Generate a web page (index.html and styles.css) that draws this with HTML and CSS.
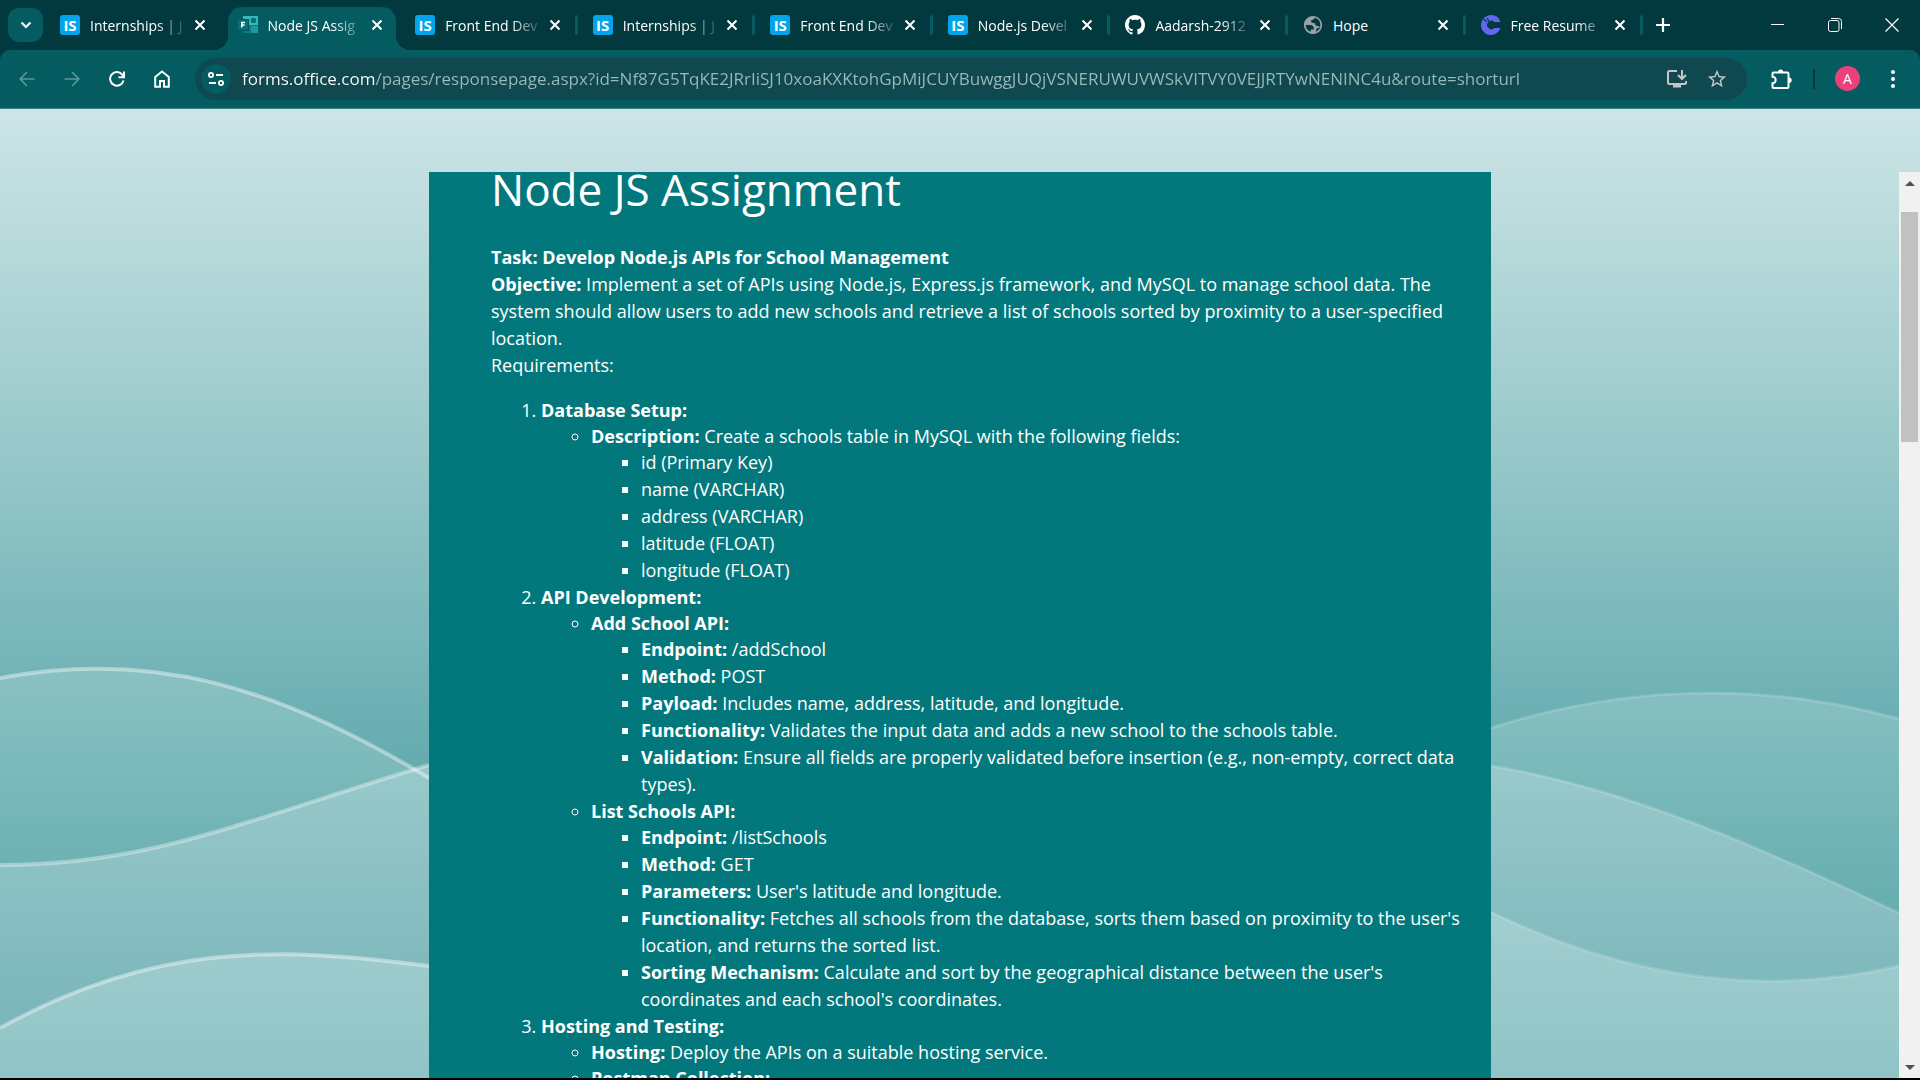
FILE: index.html
```html
<!DOCTYPE html>
<html lang="en">
<head>
<meta charset="utf-8">
<title>Node JS Assignment</title>
<link rel="stylesheet" href="styles.css">
</head>
<body>
<svg class="defs" aria-hidden="true">
  <symbol id="x" viewBox="0 0 12 12"><path d="M1.5 1.5l9 9M10.5 1.5l-9 9" stroke="currentColor" stroke-width="2" fill="none"/></symbol>
</svg>
<header class="browser">
  <div class="strip">
    <button class="search-tabs" aria-label="Search tabs"><svg width="12" height="8" viewBox="0 0 12 8"><path d="M1.5 1.5L6 6l4.5-4.5" stroke="currentColor" stroke-width="2.2" fill="none"/></svg></button>
    <nav class="tabs" aria-label="Open tabs">
      <div class="tab"><button class="tab-title"><span class="is">IS</span><span class="label">Internships | J</span></button><button class="close" aria-label="Close tab"><svg><use href="#x"/></svg></button></div>
      <div class="tab active"><button class="tab-title"><svg class="fav" viewBox="0 0 20 20"><path d="M5 1h15v9H5z" fill="#35b9c0"/><path d="M5 10h15v8H5z" fill="#0a7b83"/><circle cx="15.5" cy="5.5" r="2.8" fill="#0a6f78"/><path d="M13 11h7v7h-7z" fill="#1c9aa2"/><path d="M5 4h6v12H5z" fill="#02565d"/><rect y="5" width="10" height="10" rx="1" fill="#037178"/><path d="M3.8 12.5V7.5H7M3.8 10H6.6" stroke="#fff" stroke-width="1.6" fill="none"/></svg><span class="label">Node JS Assig</span></button><button class="close" aria-label="Close tab"><svg><use href="#x"/></svg></button></div>
      <div class="tab"><button class="tab-title"><span class="is">IS</span><span class="label">Front End Dev</span></button><button class="close" aria-label="Close tab"><svg><use href="#x"/></svg></button></div>
      <div class="tab"><button class="tab-title"><span class="is">IS</span><span class="label">Internships | J</span></button><button class="close" aria-label="Close tab"><svg><use href="#x"/></svg></button></div>
      <div class="tab"><button class="tab-title"><span class="is">IS</span><span class="label">Front End Dev</span></button><button class="close" aria-label="Close tab"><svg><use href="#x"/></svg></button></div>
      <div class="tab"><button class="tab-title"><span class="is">IS</span><span class="label">Node.js Devel</span></button><button class="close" aria-label="Close tab"><svg><use href="#x"/></svg></button></div>
      <div class="tab"><button class="tab-title"><svg class="fav" viewBox="0 0 16 16"><path fill="#fff" d="M8 0C3.58 0 0 3.58 0 8c0 3.54 2.29 6.53 5.47 7.59.4.07.55-.17.55-.38 0-.19-.01-.82-.01-1.49-2.01.37-2.53-.49-2.69-.94-.09-.23-.48-.94-.82-1.13-.28-.15-.68-.52-.01-.53.63-.01 1.08.58 1.23.82.72 1.21 1.87.87 2.33.66.07-.52.28-.87.51-1.07-1.78-.2-3.64-.89-3.64-3.95 0-.87.31-1.59.82-2.15-.08-.2-.36-1.02.08-2.12 0 0 .67-.21 2.2.82.64-.18 1.32-.27 2-.27s1.36.09 2 .27c1.53-1.04 2.2-.82 2.2-.82.44 1.1.16 1.92.08 2.12.51.56.82 1.27.82 2.15 0 3.07-1.87 3.75-3.65 3.95.29.25.54.73.54 1.48 0 1.07-.01 1.93-.01 2.2 0 .21.15.46.55.38A8.01 8.01 0 0 0 16 8c0-4.42-3.58-8-8-8z"/></svg><span class="label">Aadarsh-2912</span></button><button class="close" aria-label="Close tab"><svg><use href="#x"/></svg></button></div>
      <div class="tab"><button class="tab-title"><svg class="fav" viewBox="1 1 22 22"><path fill="#9aa0a6" d="M12 2C6.48 2 2 6.48 2 12s4.48 10 10 10 10-4.48 10-10S17.52 2 12 2zM4 12h4.4c3.4.02 4.9 1.7 4.6 5H9.5v2.5A8 8 0 0 1 4 12zm10.5 7.6c1.5-.8.6-2.6 1.5-3.6.8-.8 3-.3 3.3-1.7.2-1.1-1.4-1.3-2.3-1.3-2 0-3-1.8-2.5-3C12 10 9 9 10 7c.5-1.2 2.5-.6 3.3-1.4.4-.5.2-1.1.2-1.5a8 8 0 0 1 1 15.5z"/></svg><span class="label">Hope</span></button><button class="close" aria-label="Close tab"><svg><use href="#x"/></svg></button></div>
      <div class="tab"><button class="tab-title"><svg class="fav" viewBox="0 0 20 20"><path d="M10 0a10 10 0 0 1 9.5 7h-6.2a4.2 4.2 0 1 0 0 6h6.2A10 10 0 1 1 10 0z" fill="#6466f1"/><path d="M2.5 4l3.5 3M6 3l2 3.5" stroke="#02393e" stroke-width="1.2" fill="none"/></svg><span class="label">Free Resume</span></button><button class="close" aria-label="Close tab"><svg><use href="#x"/></svg></button></div>
    </nav>
    <button class="new-tab" aria-label="New tab"><svg width="14" height="14" viewBox="0 0 14 14"><path d="M7 0v14M0 7h14" stroke="currentColor" stroke-width="2.2"/></svg></button>
    <div class="window-controls">
      <button aria-label="Minimize"><svg width="14" height="14" viewBox="0 0 14 14"><path d="M0 6.5h13" stroke="currentColor"/></svg></button>
      <button aria-label="Restore"><svg width="14" height="14" viewBox="0 0 14 14"><rect x=".5" y="2.5" width="10.5" height="11" rx="2" stroke="currentColor" fill="none"/><path d="M3 .5h7.5a3 3 0 0 1 3 3V11" stroke="currentColor" fill="none"/></svg></button>
      <button aria-label="Close window"><svg width="14" height="14" viewBox="0 0 14 14"><path d="M.5.5l13 13M13.5.5l-13 13" stroke="currentColor" stroke-width="1.2"/></svg></button>
    </div>
  </div>
  <div class="toolbar">
    <div class="nav">
      <button class="off" aria-label="Back"><svg width="16" height="16" viewBox="0 0 16 16"><path d="M15.5 8H1.5M8 1L1.2 8 8 15" stroke="currentColor" stroke-width="1.7" fill="none"/></svg></button>
      <button class="off" aria-label="Forward"><svg width="16" height="16" viewBox="0 0 16 16"><path d="M.5 8h14M8 1l6.8 7L8 15" stroke="currentColor" stroke-width="1.7" fill="none"/></svg></button>
      <button aria-label="Reload"><svg width="16" height="16" viewBox="0 0 16 16"><path d="M14.5 9.5A6.8 6.8 0 1 1 13.2 3.6L15 5.5" stroke="currentColor" stroke-width="2" fill="none"/><path d="M15 .5v5.7H9.5" stroke="currentColor" stroke-width="2" fill="none"/></svg></button>
      <button aria-label="Home"><svg width="16" height="18" viewBox="0 0 16 18"><path d="M1.2 16.8V7L8 1.5 14.8 7v9.8H10V11H6v5.8z" stroke="currentColor" stroke-width="2" fill="none"/></svg></button>
    </div>
    <div class="omnibox">
      <button class="site-info" aria-label="View site information"><svg width="16" height="14" viewBox="0 0 16 14"><g stroke="currentColor" stroke-width="1.8" fill="none"><circle cx="3" cy="3" r="2.1"/><path d="M8 3h7M1 11h7"/><circle cx="13" cy="11" r="2.1"/></g></svg></button>
      <input type="text" aria-label="Address and search bar" spellcheck="false" value="forms.office.com/pages/responsepage.aspx?id=Nf87G5TqKE2JRrIiSJ10xoaKXKtohGpMiJCUYBuwggJUQjVSNERUWUVWSkVITVY0VEJJRTYwNENINC4u&amp;route=shorturl">
      <button class="dim" aria-label="Install app"><svg width="20" height="18" viewBox="0 0 20 18"><path d="M10 1H2.5Q1 1 1 2.5v10Q1 14 2.5 14h15q1.5 0 1.5-1.5V11M15 0v8M11 5l4 4 4-4" stroke="currentColor" stroke-width="2" fill="none"/><path d="M6 14h8v3.5H6z" fill="currentColor"/></svg></button>
      <button class="dim" aria-label="Bookmark this tab"><svg width="22" height="22" viewBox="0 0 24 24"><path fill="currentColor" d="M22 9.24l-7.19-.62L12 2 9.19 8.63 2 9.24l5.46 4.73L5.82 21 12 17.27 18.18 21l-1.63-7.03L22 9.24zM12 15.4l-3.76 2.27 1-4.28-3.32-2.88 4.38-.38L12 6.1l1.71 4.04 4.38.38-3.32 2.88 1 4.28L12 15.4z"/></svg></button>
    </div>
    <div class="actions">
      <button class="extensions" aria-label="Extensions"><svg width="22" height="20" viewBox="0 0 22 20"><path d="M2.5 3.5h14q1 0 1 1V18q0 1-1 1h-14q-1 0-1-1v-3.8a3.2 3.2 0 0 0 0-6.4V4.5q0-1 1-1z" stroke="currentColor" stroke-width="2" fill="none"/><path d="M7 3a2.6 2.6 0 0 1 5.2 0zM18 8.5a2.7 2.7 0 0 1 0 5.4z" fill="currentColor"/></svg></button>
      <span class="rule"></span>
      <button class="avatar" aria-label="Profile">A</button>
      <button class="menu" aria-label="Menu"><svg width="4" height="18" viewBox="0 0 4 18"><g fill="currentColor"><circle cx="2" cy="2" r="2"/><circle cx="2" cy="9" r="2"/><circle cx="2" cy="16" r="2"/></g></svg></button>
    </div>
  </div>
</header>
<main class="page">
  <svg class="backdrop" viewBox="0 109 1920 969" preserveAspectRatio="none" aria-hidden="true">
    <defs>
      <linearGradient id="g0" gradientUnits="userSpaceOnUse" x1="0" y1="109" x2="0" y2="770"><stop offset="0" stop-color="#cde5e6"/><stop offset=".53" stop-color="#96c7c9"/><stop offset="1" stop-color="#63abaf"/></linearGradient>
      <linearGradient id="g1" gradientUnits="userSpaceOnUse" x1="0" y1="668" x2="0" y2="900"><stop offset="0" stop-color="#8ac1c3"/><stop offset="1" stop-color="#68afb0"/></linearGradient>
      <linearGradient id="g2" gradientUnits="userSpaceOnUse" x1="0" y1="765" x2="0" y2="1020"><stop offset="0" stop-color="#99c9cb"/><stop offset="1" stop-color="#7ab6ba"/></linearGradient>
      <linearGradient id="g3" gradientUnits="userSpaceOnUse" x1="0" y1="912" x2="0" y2="1078"><stop offset="0" stop-color="#a2ced0"/><stop offset="1" stop-color="#90c4c6"/></linearGradient>
    </defs>
    <path fill="url(#g0)" d="M0 109h1920v969H0z"/>
    <path fill="url(#g1)" d="M0 678C150 650 275 685 429 778V1078H0zM1491 728C1630 683 1770 683 1899 719V1078H1491z"/>
    <path fill="url(#g2)" d="M0 865C150 865 240 822 429 765V1078H0zM1491 766C1620 787 1750 842 1899 913V1078H1491z"/>
    <path fill="url(#g3)" d="M0 1028C150 945 270 945 429 966V1078H0zM1491 912C1620 975 1755 1000 1899 966V1078H1491z"/>
    <g fill="none" stroke="#fff" stroke-width="4" stroke-opacity=".4"><path d="M0 678C150 650 275 685 429 778"/><path d="M0 865C150 865 240 822 429 765" stroke-opacity=".35"/><path d="M0 1028C150 945 270 945 429 966"/></g>
    <g fill="none" stroke="#fff" stroke-width="3" stroke-opacity=".16"><path d="M1491 728C1630 683 1770 683 1899 719"/><path d="M1491 766C1620 787 1750 842 1899 913"/><path d="M1491 912C1620 975 1755 1000 1899 966"/></g>
  </svg>
  <article class="card">
    <h1>Node JS Assignment</h1>
    <p><strong>Task: Develop Node.js APIs for School Management</strong></p>
    <p><strong>Objective:</strong> Implement a set of APIs using Node.js, Express.js framework, and MySQL to manage school data. The system should allow users to add new schools and retrieve a list of schools sorted by proximity to a user-specified location.</p>
    <p>Requirements:</p>
    <ol class="sections">
      <li><strong>Database Setup:</strong>
        <ul class="topics">
          <li><strong>Description:</strong> Create a schools table in MySQL with the following fields:
            <ul class="details">
              <li>id (Primary Key)</li>
              <li>name (VARCHAR)</li>
              <li>address (VARCHAR)</li>
              <li>latitude (FLOAT)</li>
              <li>longitude (FLOAT)</li>
            </ul>
          </li>
        </ul>
      </li>
      <li><strong>API Development:</strong>
        <ul class="topics">
          <li><strong>Add School API:</strong>
            <ul class="details">
              <li><strong>Endpoint:</strong> /addSchool</li>
              <li><strong>Method:</strong> POST</li>
              <li><strong>Payload:</strong> Includes name, address, latitude, and longitude.</li>
              <li><strong>Functionality:</strong> Validates the input data and adds a new school to the schools table.</li>
              <li><strong>Validation:</strong> Ensure all fields are properly validated before insertion (e.g., non-empty, correct data types).</li>
            </ul>
          </li>
          <li><strong>List Schools API:</strong>
            <ul class="details">
              <li><strong>Endpoint:</strong> /listSchools</li>
              <li><strong>Method:</strong> GET</li>
              <li><strong>Parameters:</strong> User's latitude and longitude.</li>
              <li><strong>Functionality:</strong> Fetches all schools from the database, sorts them based on proximity to the user's location, and returns the sorted list.</li>
              <li><strong>Sorting Mechanism:</strong> Calculate and sort by the geographical distance between the user's coordinates and each school's coordinates.</li>
            </ul>
          </li>
        </ul>
      </li>
      <li><strong>Hosting and Testing:</strong>
        <ul class="topics">
          <li><strong>Hosting:</strong> Deploy the APIs on a suitable hosting service.</li>
          <li><strong>Postman Collection:</strong></li>
        </ul>
      </li>
    </ol>
  </article>
  <div class="scrollbar" aria-hidden="true">
    <svg width="10" height="5" viewBox="0 0 10 5"><path d="M5 0l5 5H0z" fill="#505050"/></svg>
    <div class="track"><div class="thumb"></div></div>
    <svg width="10" height="5" viewBox="0 0 10 5"><path d="M0 0h10L5 5z" fill="#505050"/></svg>
  </div>
</main>
</body>
</html>
```
FILE: styles.css
```css
* { box-sizing: border-box; }

body {
  margin: 0;
  height: 100vh;
  display: flex;
  flex-direction: column;
  overflow: hidden;
  background: #000;
  color: #fff;
  font-family: "Open Sans", "Noto Sans", sans-serif;
}

button {
  display: flex;
  flex: none;
  align-items: center;
  justify-content: center;
  padding: 0;
  border: 0;
  background: none;
  color: inherit;
  font: inherit;
}

.defs { display: none; }

.browser { background: #02393e; flex: none; }

.strip { display: flex; height: 50px; align-items: center; }

.search-tabs {
  width: 35px;
  height: 34px;
  margin-left: 8px;
  border-radius: 11px;
  background: #045b60;
}

.tabs { display: flex; flex: 1; min-width: 0; height: 50px; margin-left: 2px; }

.tab {
  flex: 1 1 0;
  min-width: 0;
  display: flex;
  align-items: center;
  position: relative;
  padding: 0 17px 0 15px;
}

.tab::after {
  content: "";
  position: absolute;
  right: 0;
  top: 15px;
  width: 3px;
  height: 20px;
  border-radius: 2px;
  background: #045b60;
}

.tab:first-child::after,
.tab.active::after { display: none; }

.tab.active::before {
  content: "";
  position: absolute;
  z-index: 0;
  inset: 7px 4px 0 5px;
  border-radius: 14px 14px 0 0;
  background: #045b60;
}

.tab.active .tab-title::before,
.tab.active .tab-title::after {
  content: "";
  position: absolute;
  bottom: 0;
  width: 14px;
  height: 14px;
}

.tab.active .tab-title::before {
  left: -9px;
  background: radial-gradient(circle at 0 0, transparent 14px, #045b60 14px);
}

.tab.active .tab-title::after {
  right: -10px;
  background: radial-gradient(circle at 100% 0, transparent 14px, #045b60 14px);
}

.tab-title {
  flex: 1;
  min-width: 0;
  gap: 10px;
  justify-content: flex-start;
  font-size: 14px;
}

.tab-title > * { z-index: 1; }

.is {
  flex: none;
  width: 20px;
  height: 20px;
  border-radius: 3px;
  background: #00a5ec;
  font-size: 15px;
  font-weight: 700;
  line-height: 20px;
}

.fav { flex: none; width: 20px; height: 20px; }

.label {
  flex: 1;
  overflow: hidden;
  text-align: left;
  white-space: nowrap;
  mask-image: linear-gradient(to right, #000 70%, transparent 105%);
}

.tab:nth-child(8) .label { mask-image: none; }

.close { width: 12px; height: 12px; margin-left: 10px; z-index: 1; }
.close svg { width: 12px; height: 12px; }

.new-tab { width: 40px; height: 34px; }

.window-controls { display: flex; flex: none; margin-left: 66px; }
.window-controls button { width: 57px; height: 50px; }

.toolbar {
  display: flex;
  align-items: center;
  height: 59px;
  padding: 0 5px 1px 4px;
  border-bottom: 1px solid #3b8084;
  border-radius: 10px 10px 0 0;
  background: #045b60;
}

.nav { display: flex; margin-right: 11px; }
.nav button { width: 45px; height: 42px; }
.off { color: #5d969a; }

.omnibox {
  flex: 1;
  min-width: 0;
  display: flex;
  align-items: center;
  height: 42px;
  padding: 0 10px 0 6px;
  border-radius: 21px;
  background: #0f484e;
}

.site-info {
  width: 30px;
  height: 30px;
  margin-right: 11px;
  border-radius: 50%;
  background: #045b60;
}

.omnibox input {
  flex: 1;
  min-width: 0;
  height: 30px;
  padding: 0;
  border: 0;
  outline: 0;
  font: 17px "Open Sans", "Noto Sans", sans-serif;
  color: transparent;
  background: linear-gradient(to right, #fff 133px, #9bbabc 133px);
  background-clip: text;
}

.dim { width: 40px; height: 40px; color: #c3c7c8; }

.actions { display: flex; align-items: center; }
.extensions { width: 45px; height: 40px; margin-left: 12px; }
.rule { width: 2px; height: 20px; margin-left: 9px; background: #02393e; }
.menu { width: 45px; height: 40px; }

.avatar {
  width: 25px;
  height: 25px;
  margin: 0 10px 0 20px;
  border-radius: 50%;
  background: #ec407a;
  font-size: 14px;
}

.page {
  flex: 1;
  min-height: 0;
  display: grid;
  grid-template-columns: 1fr minmax(0, 1062px) 1fr;
  grid-template-rows: 63px minmax(0, 1fr);
  border-bottom: 2px solid #000;
}

.backdrop {
  grid-area: 1 / 1 / 3 / 4;
  width: 100%;
  height: 100%;
  min-height: 0;
}

.card {
  grid-area: 2 / 2;
  overflow: hidden;
  padding: 0 28px 0 62px;
  background: #03787c;
  font-size: 18px;
  line-height: 27px;
}

h1 {
  margin: -13px 0 25px;
  font-size: 44px;
  font-weight: 400;
  line-height: 60px;
}

p { margin: 0; }

ol, ul { margin: 0; padding-left: 50px; }

.sections { margin-top: 18px; line-height: 26px; }
.topics { list-style: circle; }
.details { list-style: square; line-height: 27px; }

.scrollbar {
  grid-area: 2 / 3;
  justify-self: end;
  width: 21px;
  display: flex;
  flex-direction: column;
  align-items: center;
  padding: 9px 0 8px;
  background: #f1f1f1;
}

.track { flex: 1; width: 17px; padding-top: 26px; }
.thumb { height: 27%; background: #c1c1c1; }
```
